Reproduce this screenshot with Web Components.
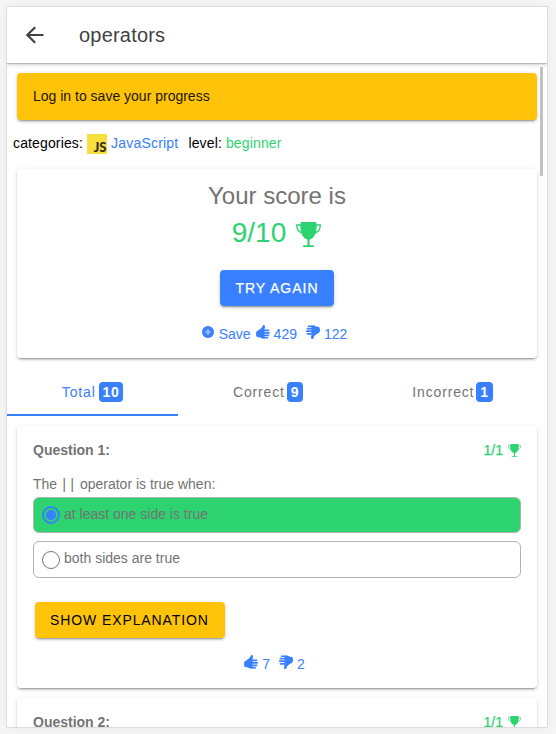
<!DOCTYPE html>
<html lang="en">
<head>
<meta charset="utf-8">
<title>operators</title>
<style>
    html, body {
        margin: 0;
        height: 100%;
        overflow: hidden;
    }
    body {
        --primary: #3880ff;
        --success: #2dd36f;
        --warning: #ffc409;
        --muted: #737373;
        box-sizing: border-box;
        padding: 6px;
        background: #f6f6f6;
        font: 14px/20px "Liberation Sans", Arial, sans-serif;
        color: #000;
    }
</style>
</head>
<body>
<quiz-page heading="operators">
    <quiz-card tone="warning">Log in to save your progress</quiz-card>
    <quiz-meta category="JavaScript" level="beginner"></quiz-meta>
    <quiz-score score="9/10" likes="429" dislikes="122"></quiz-score>
    <quiz-tabs>
        <quiz-tab count="10" active>Total</quiz-tab>
        <quiz-tab count="9">Correct</quiz-tab>
        <quiz-tab count="1">Incorrect</quiz-tab>
    </quiz-tabs>
    <quiz-question number="1" score="1/1" likes="7" dislikes="2">
        <span slot="text">The <code style="font: 14px/14px 'Liberation Mono', monospace; letter-spacing: -0.4px; margin: 0 0 0 -1px">||</code> operator is true when:</span>
        <quiz-option checked>at least one side is true</quiz-option>
        <quiz-option>both sides are true</quiz-option>
    </quiz-question>
    <quiz-question number="2" score="1/1"></quiz-question>
</quiz-page>

<script>
const ICONS = {
    back: '<path fill="none" stroke="currentColor" stroke-width="2.2" d="M20.500 12H4.500M12.200 4.200L4.300 12l7.900 7.800"/>',
    add: '<path fill="currentColor" d="M12 0a12 12 0 1 0 0 24a12 12 0 0 0 0-24z"/><path fill="none" stroke="#9fc2ff" stroke-width="3.400" d="M12 6v12M6 12h12"/>',
    trophy: '<path fill="currentColor" d="M4.300 1.200Q4.300 0 5.500 0h13q1.200 0 1.200 1.200c.1 3.400.2 6.800-.8 9.600c-1.100 3.200-3.300 5.400-5.900 5.900v5.700h4.200V24H6.800v-1.600H11v-5.700c-2.600-.5-4.800-2.700-5.900-5.900c-1-2.800-.9-6.200-.8-9.600z"/><path fill="none" stroke="currentColor" stroke-width="1.300" d="M5 2.900H.7c0 4.200 1.800 6.800 5.200 7.400M19 2.900h4.300c0 4.200-1.800 6.800-5.200 7.400"/>',
    up: '<path fill="currentColor" d="M13.200 0c1.900 0 2.400 1.500 2.200 3.200L14.600 7.500V23H11c-2.200 0-3.800-1.300-5.500-2H2.400C.8 20.500 0 17.800 0 15.400s.9-5 2.600-5.700c3-.8 6.600-3.600 8.100-6.500c.6-1.300.5-3.200 2.500-3.200z"/><rect fill="currentColor" x="13" y="7.500" width="10" height="3" rx="1.500"/><rect fill="currentColor" x="13" y="11.900" width="11" height="3" rx="1.500"/><rect fill="currentColor" x="13" y="16.200" width="10" height="3" rx="1.500"/><rect fill="currentColor" x="12" y="20.400" width="9" height="2.600" rx="1.300"/>'
};
ICONS.down = `<g transform="rotate(180 12 12)">${ICONS.up}</g>`;

class QuizElement extends HTMLElement {
    constructor() {
        super();
        this.attachShadow({ mode: 'open' });
    }

    connectedCallback() {
        this.shadowRoot.innerHTML = this.render();
    }

    attr(name) {
        return this.getAttribute(name) || '';
    }
}

class QuizIcon extends QuizElement {
    render() {
        return `
            <style>
                :host { display: inline-block; width: 14px; height: 14px; flex: none; }
                svg { display: block; width: 100%; height: 100%; }
            </style>
            <svg viewBox="0 0 24 24">${ICONS[this.attr('name')]}</svg>
        `;
    }
}

class QuizPage extends QuizElement {
    render() {
        return `
            <style>
                :host {
                    display: flex;
                    flex-direction: column;
                    position: relative;
                    box-sizing: border-box;
                    width: 542px;
                    height: 722px;
                    border: 1px solid #ddd;
                    background: #fff;
                    overflow: hidden;
                    box-shadow: 0 0 12px rgba(0,0,0,0.05);
                }
                header {
                    display: flex;
                    align-items: center;
                    flex: none;
                    height: 56px;
                    padding-left: 16px;
                    gap: 32px;
                    color: #424242;
                    box-shadow: 0 1px 1px rgba(0,0,0,0.18), 0 2px 4px rgba(0,0,0,0.16);
                }
                header quiz-icon { width: 24px; height: 24px; }
                h1 { margin: 0; font-size: 20px; font-weight: 400; letter-spacing: 0.2px; }
                main { flex: 1; min-height: 0; padding-top: 10px; }
                .thumb {
                    position: absolute;
                    top: 60px;
                    right: 4px;
                    width: 3px;
                    height: 109px;
                    background: #c1c1c1;
                }
            </style>
            <header><quiz-icon name="back"></quiz-icon><h1>${this.attr('heading')}</h1></header>
            <main><slot></slot></main>
            <div class="thumb"></div>
        `;
    }
}

class QuizCard extends QuizElement {
    render() {
        return `
            <style>
                :host {
                    display: block;
                    margin: 0 10px 10px;
                    padding: 13px 16px 14px;
                    border-radius: 4px;
                    background: #fff;
                    box-shadow: 0 3px 1px -2px rgba(0,0,0,0.2), 0 2px 2px 0 rgba(0,0,0,0.14), 0 1px 5px 0 rgba(0,0,0,0.12);
                }
                :host([tone="warning"]) { background: var(--warning); color: #1c1600; }
            </style>
            <slot></slot>
        `;
    }
}

class QuizMeta extends QuizElement {
    render() {
        return `
            <style>
                :host { display: flex; align-items: center; height: 26px; margin: 0 6px 13px; letter-spacing: 0.14px; }
                .logo {
                    display: flex;
                    align-items: flex-end;
                    justify-content: flex-end;
                    width: 20px;
                    height: 20px;
                    margin: 2px 4px 0;
                    box-sizing: border-box;
                    padding: 0 1px 1px 0;
                    background: #f7df3e;
                    color: #342b16;
                    font: 900 13px/11px Lato, sans-serif;
                    letter-spacing: -0.3px;
                }
                .category { color: var(--primary); margin-right: 10px; letter-spacing: 0.2px; }
                .level { color: var(--success); margin-left: 4px; }
            </style>
            <span>categories:</span><span class="logo">JS</span>
            <span class="category">${this.attr('category')}</span>
            <span>level:</span><span class="level">${this.attr('level')}</span>
        `;
    }
}

class QuizButton extends QuizElement {
    render() {
        return `
            <style>
                :host { display: inline-block; }
                button {
                    display: block;
                    height: 36px;
                    padding: 0 15px;
                    border: 0;
                    border-radius: 4px;
                    background: var(--primary);
                    color: #fff;
                    font: 500 14px/36px "Liberation Sans", Arial, sans-serif;
                    letter-spacing: 1px;
                    -webkit-text-stroke: 0.25px;
                    text-transform: uppercase;
                    box-shadow: 0 3px 1px -2px rgba(0,0,0,0.2), 0 2px 2px 0 rgba(0,0,0,0.14), 0 1px 5px 0 rgba(0,0,0,0.12);
                }
                :host([tone="warning"]) button {
                    padding: 0 16px 0 15px;
                    background: var(--warning);
                    color: #000;
                    letter-spacing: 0.9px;
                    -webkit-text-stroke: 0;
                }
            </style>
            <button><slot></slot></button>
        `;
    }
}

class QuizVotes extends QuizElement {
    render() {
        const save = this.hasAttribute('save')
            ? '<quiz-icon class="add" name="add"></quiz-icon><span class="save">Save</span>'
            : '';
        return `
            <style>
                :host { display: flex; justify-content: center; color: var(--primary); }
                quiz-icon { margin: 1px 4px 0 0; }
                .add { width: 12px; height: 12px; margin: 2px 5px 0 0; }
                .save { margin-right: 5px; }
                .likes { margin-right: 9px; }
            </style>
            ${save}
            <quiz-icon name="up"></quiz-icon><span class="likes">${this.attr('likes')}</span>
            <quiz-icon name="down"></quiz-icon><span>${this.attr('dislikes')}</span>
        `;
    }
}

class QuizScore extends QuizElement {
    render() {
        return `
            <style>
                :host { display: block; }
                quiz-card { padding: 12px 16px 14px; text-align: center; }
                h2 { margin: 0; font-size: 24px; line-height: 30px; font-weight: 400; color: var(--muted); }
                .score {
                    display: flex;
                    align-items: center;
                    justify-content: center;
                    gap: 10px;
                    height: 44px;
                    margin-bottom: 15px;
                    padding-right: 1px;
                    font-size: 28px;
                    color: var(--success);
                }
                .score quiz-icon { width: 25px; height: 25px; margin-top: 3px; }
                quiz-votes { margin-top: 18px; padding-right: 5px; }
            </style>
            <quiz-card>
                <h2>Your score is</h2>
                <div class="score"><span>${this.attr('score')}</span><quiz-icon name="trophy"></quiz-icon></div>
                <quiz-button>Try again</quiz-button>
                <quiz-votes save likes="${this.attr('likes')}" dislikes="${this.attr('dislikes')}"></quiz-votes>
            </quiz-card>
        `;
    }
}

class QuizTabs extends QuizElement {
    render() {
        return `
            <style>
                :host { display: grid; grid-template-columns: 171px 180px 189px; height: 48px; margin-bottom: 10px; }
            </style>
            <slot></slot>
        `;
    }
}

class QuizTab extends QuizElement {
    render() {
        return `
            <style>
                :host {
                    display: flex;
                    align-items: center;
                    justify-content: center;
                    box-sizing: border-box;
                    padding-top: 2px;
                    border-bottom: 2px solid transparent;
                    color: var(--muted);
                    letter-spacing: 0.84px;
                }
                :host([active]) { color: var(--primary); border-color: var(--primary); }
                b {
                    margin-left: 2px;
                    padding: 0 4px;
                    border-radius: 4px;
                    background: var(--primary);
                    color: #fff;
                    letter-spacing: 0.5px;
                }
                :host([active]) b { margin-left: 3px; }
            </style>
            <slot></slot><b>${this.attr('count')}</b>
        `;
    }
}

class QuizOption extends QuizElement {
    render() {
        return `
            <style>
                :host {
                    display: flex;
                    align-items: center;
                    box-sizing: border-box;
                    height: 37px;
                    margin-bottom: 8px;
                    padding-left: 8px;
                    border: 1px solid #b3b3b3;
                    border-radius: 6px;
                }
                :host([checked]) { height: 36px; background: var(--success); }
                i {
                    display: flex;
                    box-sizing: border-box;
                    width: 18px;
                    height: 18px;
                    margin-right: 4px;
                    border: 1px solid #767676;
                    border-radius: 50%;
                    background: #fff;
                }
                :host([checked]) i {
                    border: 2px solid var(--primary);
                    background: radial-gradient(circle, var(--primary) 4.7px, transparent 5.3px);
                }
                span { margin-top: -3px; }
                :host([checked]) span { margin-top: -2px; }
            </style>
            <i></i><span><slot></slot></span>
        `;
    }
}

class QuizQuestion extends QuizElement {
    render() {
        // the footer belongs to questions that have been voted on
        const footer = this.hasAttribute('likes') ? `
            <quiz-button tone="warning">Show explanation</quiz-button>
            <quiz-votes likes="${this.attr('likes')}" dislikes="${this.attr('dislikes')}"></quiz-votes>
        ` : '';
        return `
            <style>
                :host { display: block; }
                quiz-card { padding: 14px 16px; color: var(--muted); }
                .head { display: flex; justify-content: space-between; margin-bottom: 14px; font-weight: bold; }
                .score { display: flex; align-items: center; gap: 5px; color: var(--success); font-weight: 400; -webkit-text-stroke: 0.25px; }
                .score quiz-icon { width: 13px; height: 13px; margin-top: 1px; }
                .text { height: 23px; }
                quiz-button { margin: 16px 2px; }
                quiz-votes { padding-right: 5px; }
            </style>
            <quiz-card>
                <div class="head">
                    <span>Question ${this.attr('number')}:</span>
                    <span class="score">${this.attr('score')}<quiz-icon name="trophy"></quiz-icon></span>
                </div>
                <div class="text"><slot name="text"></slot></div>
                <slot></slot>
                ${footer}
            </quiz-card>
        `;
    }
}

customElements.define('quiz-icon', QuizIcon);
customElements.define('quiz-page', QuizPage);
customElements.define('quiz-card', QuizCard);
customElements.define('quiz-meta', QuizMeta);
customElements.define('quiz-button', QuizButton);
customElements.define('quiz-votes', QuizVotes);
customElements.define('quiz-score', QuizScore);
customElements.define('quiz-tabs', QuizTabs);
customElements.define('quiz-tab', QuizTab);
customElements.define('quiz-option', QuizOption);
customElements.define('quiz-question', QuizQuestion);
</script>
</body>
</html>
